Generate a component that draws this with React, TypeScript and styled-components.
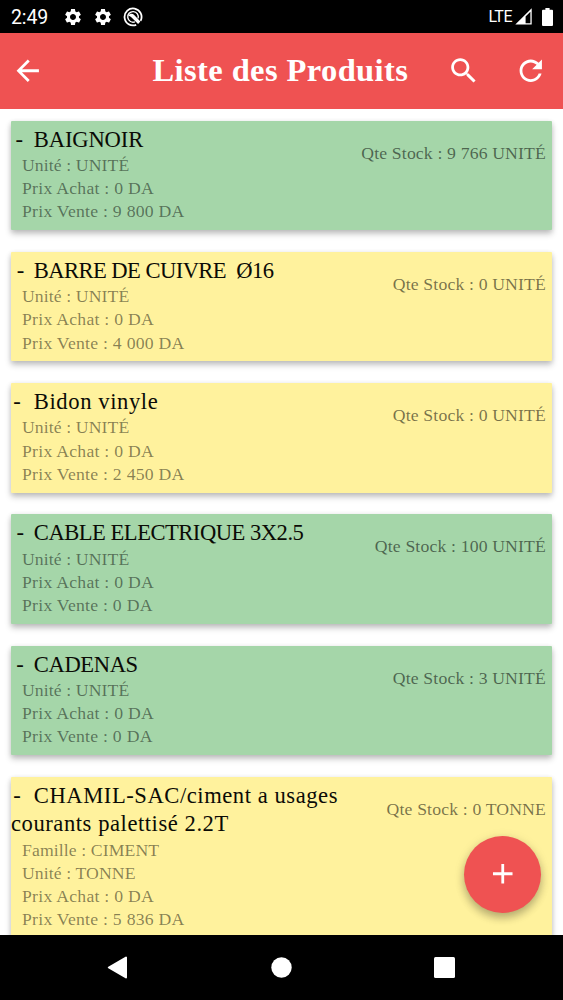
import React from "react";
import styled, { createGlobalStyle } from "styled-components";

type Product = {
    name: string
    tracking: number
    details: string[]
    stock: string
    available: boolean
}

const products: Product[] = [
    {
        name: "BAIGNOIR",
        tracking: -0.15,
        details: ["Unité : UNITÉ", "Prix Achat : 0 DA", "Prix Vente : 9 800 DA"],
        stock: "9 766 UNITÉ",
        available: true
    },
    {
        name: "BARRE DE CUIVRE \u00a0Ø16",
        tracking: -0.57,
        details: ["Unité : UNITÉ", "Prix Achat : 0 DA", "Prix Vente : 4 000 DA"],
        stock: "0 UNITÉ",
        available: false
    },
    {
        name: "Bidon vinyle",
        tracking: 0.6,
        details: ["Unité : UNITÉ", "Prix Achat : 0 DA", "Prix Vente : 2 450 DA"],
        stock: "0 UNITÉ",
        available: false
    },
    {
        name: "CABLE ELECTRIQUE 3X2.5",
        tracking: -0.5,
        details: ["Unité : UNITÉ", "Prix Achat : 0 DA", "Prix Vente : 0 DA"],
        stock: "100 UNITÉ",
        available: true
    },
    {
        name: "CADENAS",
        tracking: -0.4,
        details: ["Unité : UNITÉ", "Prix Achat : 0 DA", "Prix Vente : 0 DA"],
        stock: "3 UNITÉ",
        available: true
    },
    {
        name: "CHAMIL-SAC/ciment a usages courants palettisé 2.2T",
        tracking: 0.55,
        details: ["Famille : CIMENT", "Unité : TONNE", "Prix Achat : 0 DA", "Prix Vente : 5 836 DA"],
        stock: "0 TONNE",
        available: false
    }
];

const GlobalStyle = createGlobalStyle`
    body {
        margin: 0;
        background: #fff;
    }
    * {
        box-sizing: border-box;
    }
`;

const Screen = styled.div`
    position: relative;
    display: flex;
    flex-direction: column;
    width: 563px;
    height: 1000px;
    overflow: hidden;
    font-family: "Liberation Serif", serif;
`;

const StatusBar = styled.div`
    flex: none;
    display: flex;
    align-items: center;
    height: 33px;
    padding: 0 10px 0 11px;
    background: #000;
    color: #fff;
    font-family: Roboto, sans-serif;
`;

const Clock = styled.span`
    width: 52px;
    padding-top: 1px;
    font-size: 19.5px;
    letter-spacing: -0.1px;
`;

const StatusIcons = styled.div`
    display: flex;
    align-items: center;
    gap: 10px;
    flex: 1;
`;

const Network = styled.span`
    font-size: 16px;
    letter-spacing: -0.5px;
    margin-right: 3px;
`;

const Battery = styled.svg`
    margin-left: 9px;
`;

const AppBar = styled.header`
    flex: none;
    display: flex;
    align-items: center;
    height: 76px;
    padding: 0 16px 0 11px;
    background: #ef5252;
    color: #fff;
`;

const PageTitle = styled.h1`
    flex: 1;
    margin: 0 0 0 108px;
    padding-bottom: 2px;
    font-size: 32.5px;
    line-height: 40px;
    letter-spacing: 0.4px;
    white-space: nowrap;
`;

const Actions = styled.div`
    display: flex;
    gap: 33px;
`;

const Glyph = styled.svg<{ $size: number }>`
    display: block;
    flex: none;
    width: ${props => props.$size}px;
    height: ${props => props.$size}px;
    fill: currentColor;
`;

const List = styled.main`
    flex: 1;
    min-height: 0;
    overflow: hidden;
    display: flex;
    flex-direction: column;
    gap: 21.75px;
    padding: 11.5px 11px 0;
`;

const Card = styled.article<{ $available: boolean }>`
    flex: none;
    display: flex;
    align-items: flex-start;
    min-height: 109.5px;
    padding: 5px 6px 6px 0;
    border-radius: 1px;
    background: ${props => (props.$available ? "#a5d6a9" : "#fff29d")};
    box-shadow: 0 4px 6px rgba(0, 0, 0, 0.22), 0 1px 5px rgba(0, 0, 0, 0.1);
`;

const Info = styled.div`
    flex: 1;
    min-width: 0;
`;

const Name = styled.h2<{ $tracking: number }>`
    margin: 0;
    font-size: 22.6px;
    font-weight: 400;
    line-height: 28.4px;
    letter-spacing: ${props => props.$tracking}px;
    text-indent: ${props => 4 - props.$tracking * 3}px;
    color: #0b0b06;
`;

const Detail = styled.p<{ $wide: boolean }>`
    margin: 0 0 0 11px;
    font-size: 17.7px;
    line-height: 23.25px;
    letter-spacing: ${props => (props.$wide ? 0.25 : 0.1)}px;
    color: rgba(0, 0, 0, 0.48);
`;

const Stock = styled.p`
    flex: none;
    margin: 16px 0 0;
    font-size: 17.7px;
    line-height: 23.25px;
    letter-spacing: 0.15px;
    color: rgba(0, 0, 0, 0.54);
`;

const AddButton = styled.button`
    position: absolute;
    right: 22px;
    bottom: 87.5px;
    display: flex;
    align-items: center;
    justify-content: center;
    width: 77px;
    height: 77px;
    padding: 0;
    border: none;
    border-radius: 50%;
    background: #ef5252;
    color: #fff;
    box-shadow: 0 5px 8px rgba(0, 0, 0, 0.24), 0 2px 12px rgba(0, 0, 0, 0.1);
`;

const NavBar = styled.nav`
    flex: none;
    display: flex;
    align-items: center;
    justify-content: space-between;
    height: 65.5px;
    padding: 0 108px 0 107px;
    background: #000;
`;

const GEAR = "M19.14 12.94c.04-.3.06-.61.06-.94 0-.32-.02-.64-.07-.94l2.03-1.58c.18-.14.23-.41.12-.61l-1.92-3.32c-.12-.22-.37-.29-.59-.22l-2.39.96c-.5-.38-1.03-.7-1.62-.94l-.36-2.54c-.04-.24-.24-.41-.48-.41h-3.84c-.24 0-.43.17-.47.41l-.36 2.54c-.59.24-1.13.57-1.62.94l-2.39-.96c-.22-.08-.47 0-.59.22L2.74 8.87c-.12.21-.08.47.12.61l2.03 1.58c-.05.3-.09.63-.09.94s.02.64.07.94l-2.03 1.58c-.18.14-.23.41-.12.61l1.92 3.32c.12.22.37.29.59.22l2.39-.96c.5.38 1.03.7 1.62.94l.36 2.54c.05.24.24.41.48.41h3.84c.24 0 .44-.17.47-.41l.36-2.54c.59-.24 1.13-.56 1.62-.94l2.39.96c.22.08.47 0 .59-.22l1.92-3.32c.12-.22.07-.47-.12-.61l-2.01-1.58zM12 15.6c-1.98 0-3.6-1.62-3.6-3.6s1.62-3.6 3.6-3.6 3.6 1.62 3.6 3.6-1.62 3.6-3.6 3.6z";
const BACK = "M20 11H7.83l5.59-5.59L12 4l-8 8 8 8 1.41-1.41L7.83 13H20v-2z";
const SEARCH = "M15.5 14h-.79l-.28-.27C15.41 12.59 16 11.11 16 9.5 16 5.91 13.09 3 9.5 3S3 5.91 3 9.5 5.91 16 9.5 16c1.61 0 3.09-.59 4.23-1.57l.27.28v.79l5 4.99L20.49 19l-4.99-5zm-6 0C7.01 14 5 11.99 5 9.5S7.01 5 9.5 5 14 7.01 14 9.5 11.99 14 9.5 14z";
const REFRESH = "M17.65 6.35C16.2 4.9 14.21 4 12 4c-4.42 0-7.99 3.58-7.99 8s3.57 8 7.99 8c3.73 0 6.84-2.55 7.73-6h-2.08c-.82 2.33-3.04 4-5.65 4-3.31 0-6-2.69-6-6s2.69-6 6-6c1.66 0 3.14.69 4.22 1.78L13 11h7V4l-2.35 2.35z";
const PLUS = "M19 13h-6v6h-2v-6H5v-2h6V5h2v6h6v2z";

const Icon = ({ path, size }: { path: string, size: number }) => (
    <Glyph viewBox="0 0 24 24" $size={size}><path d={path} /></Glyph>
);

const ProductCard = ({ product }: { product: Product }) => (
    <Card $available={product.available}>
        <Info>
            <Name $tracking={product.tracking}>{`-\u00a0\u00a0${product.name}`}</Name>
            {product.details.map(detail => (
                <Detail key={detail} $wide={detail.startsWith("Prix")}>{detail}</Detail>
            ))}
        </Info>
        <Stock>Qte Stock : {product.stock}</Stock>
    </Card>
);

const App = () => {
    return (
        <Screen>
            <GlobalStyle />
            <StatusBar>
                <Clock>2:49</Clock>
                <StatusIcons>
                    <Icon path={GEAR} size={20} />
                    <Icon path={GEAR} size={20} />
                    <svg width="20" height="20" viewBox="0 0 20 20" fill="none" stroke="#fff">
                        <path d="M13.2 17.8A8.5 8.5 0 1 1 17.6 13.8" strokeWidth="1.8" />
                        <path d="M12 14.8A5.3 5.3 0 1 1 15.1 11.4" strokeWidth="1.4" />
                        <path d="M5.2 8.6C7 6.4 9.6 6.4 11.2 8l6.2 6.6-2.3 2.3-6.3-6.2c-1-.9-2-1.4-3.6-2.1z" fill="#fff" stroke="none" />
                    </svg>
                </StatusIcons>
                <Network>LTE</Network>
                <svg width="18" height="17" viewBox="0 0 18 17">
                    <path d="M.3 16.5L16.7.3v16.2z" fill="#fff" />
                    <path d="M10.6 8.5L15.4 3.7v11.5h-4.8z" fill="#000" />
                </svg>
                <Battery width="11" height="18" viewBox="0 0 11 18">
                    <path d="M3.4 0h4.2v1.8H10a1 1 0 0 1 1 1V17a1 1 0 0 1-1 1H1a1 1 0 0 1-1-1V2.8a1 1 0 0 1 1-1h2.4z" fill="#fff" />
                </Battery>
            </StatusBar>
            <AppBar>
                <Icon path={BACK} size={33.5} />
                <PageTitle>Liste des Produits</PageTitle>
                <Actions>
                    <Icon path={SEARCH} size={33.5} />
                    <Icon path={REFRESH} size={33.5} />
                </Actions>
            </AppBar>
            <List>
                {products.map(product => <ProductCard key={product.name} product={product} />)}
            </List>
            <NavBar>
                <svg width="21" height="23" viewBox="0 0 21 23">
                    <path d="M19 1.5v20L1.8 11.5z" fill="#fff" stroke="#fff" strokeWidth="2" strokeLinejoin="round" />
                </svg>
                <svg width="21" height="21" viewBox="0 0 21 21">
                    <circle cx="10.5" cy="10.5" r="10.2" fill="#fff" />
                </svg>
                <svg width="21" height="21" viewBox="0 0 21 21">
                    <rect width="21" height="21" rx="1.5" fill="#fff" />
                </svg>
            </NavBar>
            <AddButton><Icon path={PLUS} size={33.5} /></AddButton>
        </Screen>
    );
}

export default App;
